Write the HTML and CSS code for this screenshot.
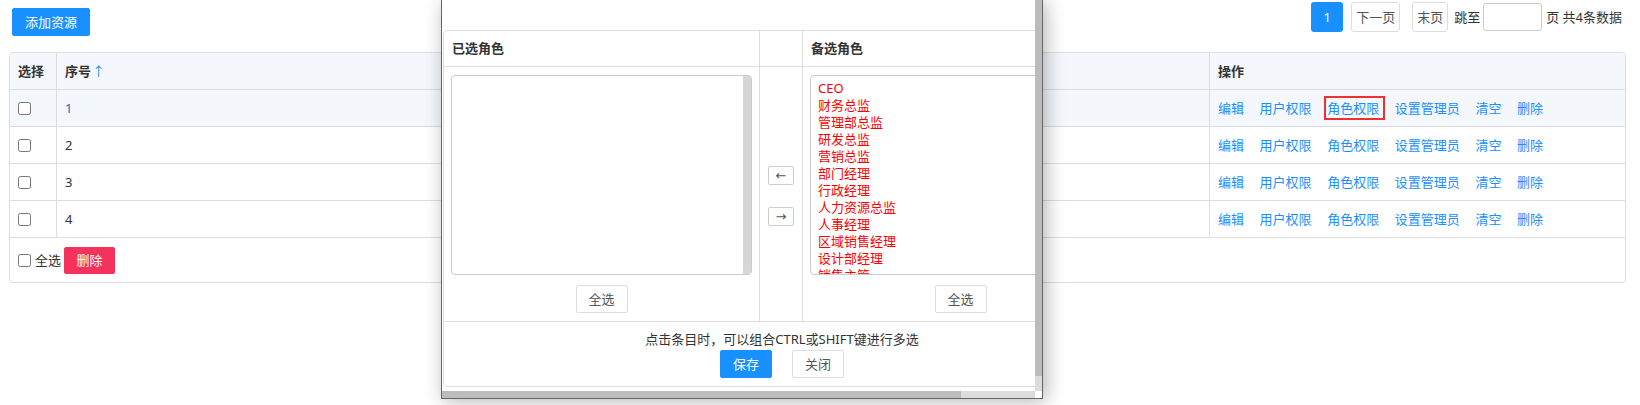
FILE: index.html
```html
<!DOCTYPE html>
<html lang="zh-CN">
<head>
    <meta charset="UTF-8">
    <meta name="viewport" content="width=device-width, initial-scale=1.0">
    <title>资源管理</title>
    <link rel="stylesheet" href="styles.css">
</head>
<body>
    <div class="toolbar">
        <button class="btn btn-primary add-btn">添加资源</button>
        <div class="pager">
            <span class="page-num">1</span>
            <span class="page-btn next">下一页</span>
            <span class="page-btn last">末页</span>
            <span class="jump">跳至</span>
            <input class="jump-input" type="text">
            <span class="total">页 共4条数据</span>
        </div>
    </div>

    <div class="grid">
        <div class="row head">
            <div class="cell">选择</div>
            <div class="cell">序号<span class="sort">↑</span></div>
            <div class="cell">操作</div>
        </div>
        <div class="row hover">
            <div class="cell"><input type="checkbox"></div>
            <div class="cell num first">1</div>
            <div class="cell ops">
                <a>编辑</a><a>用户权限</a><a class="marked">角色权限</a><a>设置管理员</a><a>清空</a><a>删除</a>
            </div>
        </div>
        <div class="row">
            <div class="cell"><input type="checkbox"></div>
            <div class="cell num">2</div>
            <div class="cell ops">
                <a>编辑</a><a>用户权限</a><a>角色权限</a><a>设置管理员</a><a>清空</a><a>删除</a>
            </div>
        </div>
        <div class="row">
            <div class="cell"><input type="checkbox"></div>
            <div class="cell num">3</div>
            <div class="cell ops">
                <a>编辑</a><a>用户权限</a><a>角色权限</a><a>设置管理员</a><a>清空</a><a>删除</a>
            </div>
        </div>
        <div class="row">
            <div class="cell"><input type="checkbox"></div>
            <div class="cell num">4</div>
            <div class="cell ops">
                <a>编辑</a><a>用户权限</a><a>角色权限</a><a>设置管理员</a><a>清空</a><a>删除</a>
            </div>
        </div>
        <div class="grid-foot">
            <label class="check-all"><input type="checkbox">全选</label>
            <button class="btn btn-danger">删除</button>
        </div>
    </div>

    <!-- 角色权限弹窗 -->
    <div class="modal">
        <div class="modal-main">
            <div class="modal-view">
                <div class="panel">
                    <div class="panel-head">
                        <div class="pcol">已选角色</div>
                        <div class="pmid"></div>
                        <div class="pcol">备选角色</div>
                    </div>
                    <div class="panel-body">
                        <div class="pcol">
                            <div class="listbox">
                                <div class="list"></div>
                                <div class="list-bar"></div>
                            </div>
                            <button class="btn btn-default">全选</button>
                        </div>
                        <div class="pmid">
                            <button class="arrow">←</button>
                            <button class="arrow">→</button>
                        </div>
                        <div class="pcol">
                            <div class="listbox">
                                <div class="list roles">
                                    <div>CEO</div>
                                    <div>财务总监</div>
                                    <div>管理部总监</div>
                                    <div>研发总监</div>
                                    <div>营销总监</div>
                                    <div>部门经理</div>
                                    <div>行政经理</div>
                                    <div>人力资源总监</div>
                                    <div>人事经理</div>
                                    <div>区域销售经理</div>
                                    <div>设计部经理</div>
                                    <div>销售主管</div>
                                </div>
                            </div>
                            <button class="btn btn-default">全选</button>
                        </div>
                    </div>
                    <div class="panel-foot">
                        <p class="tip">点击条目时，可以组合CTRL或SHIFT键进行多选</p>
                        <div class="foot-btns">
                            <button class="btn btn-primary">保存</button>
                            <button class="btn btn-default">关闭</button>
                        </div>
                    </div>
                </div>
            </div>
            <div class="vbar"><div class="vthumb"></div></div>
        </div>
        <div class="hbar">
            <div class="hthumb"></div>
            <div class="htrack"></div>
            <div class="corner"></div>
        </div>
    </div>
</body>
</html>
```

FILE: styles.css
```css
:root {
    --blue: #1890ff;
    --line: #dddddd;
    --head-bg: #f4f8fd;
    --text: #333;
}
body {
    margin: 0;
    font-family: "Noto Sans", "Noto Sans CJK SC", sans-serif;
    font-size: 13px;
    line-height: 17px;
    color: var(--text);
    background: #fff;
    position: relative;
    height: 405px;
    overflow: hidden;
}
.btn {
    font-family: inherit;
    font-size: 13px;
    line-height: 17px;
    height: 28px;
    padding: 0 12px;
    border-radius: 2px;
    cursor: pointer;
}
.btn-primary {
    background: var(--blue);
    border: 1px solid var(--blue);
    color: #fff;
}
.btn-danger {
    background: #f5325c;
    border: 1px solid #f5325c;
    color: #fff;
}
.btn-default {
    background: #fff;
    border: 1px solid var(--line);
    color: #555;
}

/* barre du haut */
.toolbar {
    display: flex;
    justify-content: space-between;
    align-items: flex-start;
    height: 52px;
    padding: 0 18px 0 12px;
    box-sizing: border-box;
}
.add-btn {
    margin-top: 8px;
    width: 78px;
    padding: 0;
}
.pager {
    display: flex;
    align-items: center;
    margin-top: 2px;
    height: 30px;
}
.page-num {
    width: 32px;
    height: 30px;
    line-height: 30px;
    text-align: center;
    background: var(--blue);
    color: #fff;
    border-radius: 3px;
}
.page-btn {
    height: 28px;
    line-height: 28px;
    padding: 0 4px;
    border: 1px solid var(--line);
    border-radius: 3px;
    color: #555;
}
.next { margin-left: 8px; }
.last { margin-left: 12px; }
.jump { margin-left: 6px; }
.jump-input {
    margin: 0 4px 0 3px;
    width: 59px;
    height: 28px;
    box-sizing: border-box;
    border: 1px solid #ccc;
    border-radius: 3px;
    padding: 0 4px;
}

/* tableau */
.grid {
    margin: 0 14px 0 9px;
    border: 1px solid var(--line);
    border-radius: 4px;
    overflow: hidden;
}
.row {
    display: grid;
    grid-template-columns: 46px 1fr 416px;
    height: 37px;
    border-bottom: 1px solid var(--line);
    box-sizing: border-box;
}
.row.head, .row.hover {
    background: var(--head-bg);
}
.row.head .cell {
    font-weight: bold;
}
.cell {
    display: flex;
    align-items: center;
    padding: 0 8px;
}
.cell + .cell {
    border-left: 1px solid var(--line);
}
.cell input {
    margin: 0;
}
.sort {
    color: var(--blue);
    font-weight: normal;
    margin-left: 1px;
}
.num.first {
    color: #2b6cb0;
}
.ops {
    gap: 15.6px;
}
.ops a {
    color: var(--blue);
    cursor: pointer;
}
.ops a.marked {
    position: relative;
}
.ops a.marked::after {
    content: "";
    position: absolute;
    left: -3px;
    right: -6px;
    top: -4px;
    bottom: -3px;
    border: 2px solid #f03030;
}
.grid-foot {
    display: flex;
    align-items: center;
    height: 44px;
    padding-left: 8px;
}
.check-all {
    display: flex;
    align-items: center;
    gap: 4px;
}
.check-all input {
    margin: 0;
}
.grid-foot .btn {
    margin-left: 3px;
    height: 27px;
    width: 51px;
    padding: 0;
}

/* fenetre modale */
.modal {
    position: absolute;
    left: 441px;
    top: 0;
    width: 602px;
    height: 399px;
    box-sizing: border-box;
    border: 1px solid #666;
    border-top: 0;
    background: #fff;
    box-shadow: 3px 2px 18px rgba(0, 0, 0, 0.3);
    display: flex;
    flex-direction: column;
    z-index: 10;
}
.modal-main {
    display: flex;
    height: 391px;
}
.modal-view {
    width: 593px;
    overflow: hidden;
    padding-top: 30px;
    box-sizing: border-box;
}
.vbar {
    width: 7px;
    background: #dcdcdc;
}
.vthumb {
    height: 376px;
    background: #bcbcbc;
}
.hbar {
    display: flex;
    height: 7px;
}
.hthumb {
    width: 519px;
    background: #bcbcbc;
}
.htrack {
    width: 74px;
    background: #dcdcdc;
}
.corner {
    flex: 1;
    background: #fff;
}
.panel {
    margin-left: 1px;
    width: 676px;
    border: 1px solid var(--line);
    border-radius: 4px;
}
.panel-head, .panel-body {
    display: flex;
    border-bottom: 1px solid var(--line);
}
.panel-head {
    height: 36px;
    box-sizing: border-box;
    font-weight: bold;
}
.panel-head .pcol {
    display: flex;
    align-items: center;
    padding: 0 8px;
}
.pcol {
    width: 315px;
    box-sizing: border-box;
}
.pcol + .pmid, .pmid + .pcol {
    border-left: 1px solid var(--line);
}
.pmid + .pcol {
    width: 316px;
}
.pmid {
    width: 43px;
    box-sizing: border-box;
}
.panel-body {
    height: 255px;
    box-sizing: border-box;
}
.panel-body .pcol {
    display: flex;
    flex-direction: column;
    align-items: center;
    padding: 8px 7px 0;
}
.listbox {
    display: flex;
    width: 100%;
    height: 200px;
    box-sizing: border-box;
    border: 1px solid #ccc;
    border-radius: 4px;
    overflow: hidden;
}
.list {
    flex: 1;
    padding: 4px 7px;
}
.list-bar {
    width: 8px;
    background: #d6d6d6;
}
.roles {
    color: #ff0000;
    white-space: nowrap;
}
.panel-body .pcol .btn {
    margin-top: 10px;
    width: 52px;
    padding: 0;
}
.panel-body .pmid {
    display: flex;
    flex-direction: column;
    align-items: center;
    justify-content: center;
    gap: 22px;
    padding-top: 3px;
}
.arrow {
    width: 26px;
    height: 19px;
    padding: 0;
    font-family: "DejaVu Sans", sans-serif;
    font-size: 13px;
    line-height: 15px;
    color: #555;
    background: #fff;
    border: 1px solid #ccc;
    border-radius: 2px;
}
.panel-foot {
    height: 64px;
    padding-top: 9px;
    box-sizing: border-box;
    text-align: center;
}
.tip {
    margin: 0;
}
.foot-btns {
    display: flex;
    justify-content: center;
    gap: 20px;
    margin-top: 2px;
}
.foot-btns .btn {
    width: 52px;
    padding: 0;
}
```
